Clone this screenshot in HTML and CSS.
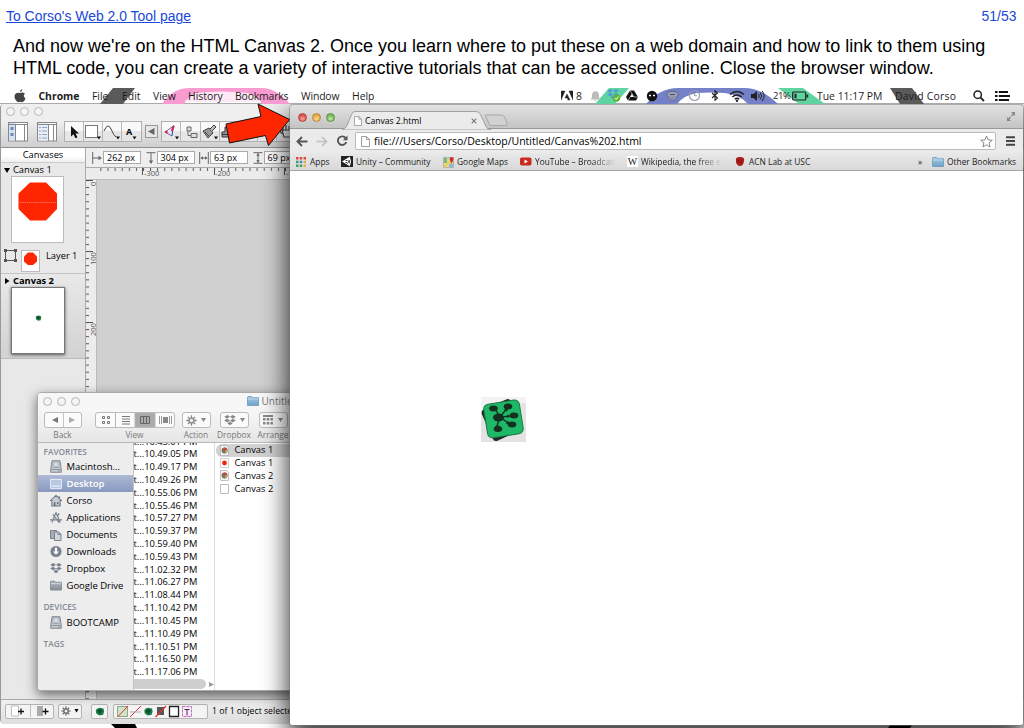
FILE: index.html
```html
<!DOCTYPE html>
<html lang="en">
<head>
<meta charset="utf-8">
<title>Web 2.0 Tutorial - 51/53</title>
<link rel="stylesheet" href="styles.css">
</head>
<body>
<svg class="defs" width="0" height="0">
  <defs>
    <linearGradient id="gFolder" x1="0" y1="0" x2="0" y2="1"><stop offset="0" stop-color="#a5cbe4"/><stop offset="1" stop-color="#6fa3c8"/></linearGradient>
    <linearGradient id="gGrey" x1="0" y1="0" x2="0" y2="1"><stop offset="0" stop-color="#b4b9c0"/><stop offset="1" stop-color="#858c96"/></linearGradient>
    <pattern id="tickH" x="0.2" width="7.1" height="12" patternUnits="userSpaceOnUse"><path d="M.5 0v3" stroke="#555"/></pattern>
    <pattern id="tickV" y="0" width="12" height="7.1" patternUnits="userSpaceOnUse"><path d="M0 .5h3" stroke="#555"/></pattern>
    <symbol id="page" viewBox="0 0 9 11"><path d="M.5.5h5l3 3v7h-8zM5.5.5v3h3" fill="#fff" stroke="#888" stroke-width=".8"/></symbol>
    <symbol id="folder" viewBox="0 0 12 10"><path d="M.5 9.5V1.2l.6-.7h3.4l1 1.2h6v7.8z" fill="url(#gFolder)" stroke="#5f8fb3" stroke-width=".7"/><path d="M.8 3h10.4" stroke="#c5e0f0" stroke-width=".8"/></symbol>
    <symbol id="drive" viewBox="0 0 12 13"><path d="M2 .7h8l1.3 8.6v3H.7v-3z" fill="#c3c8ce" stroke="#7d848e" stroke-width=".9"/><rect x="3" y="2" width="6" height="5.6" fill="#e4e7ea" stroke="#8b929b" stroke-width=".7"/><path d="M4.5 3.5v1m3-1v1M4.3 6q1.7 1 3.4 0M1 9.5h10M8 11h2" stroke="#7d848e" stroke-width=".7" fill="none"/></symbol>
    <symbol id="dbx" viewBox="0 0 12 11"><path d="M3.5 0 6 1.8 3 3.7.2 1.8zM8.5 0 6 1.8l3 1.9 2.8-1.9zM3 3.7l3 1.9-2.5 1.9L.2 5.6zM9 3.7 6 5.6l2.5 1.9 3.3-1.9zM6 6.6l2.6 1.9L6 10.3 3.4 8.5z"/></symbol>
    <symbol id="pdoc" viewBox="0 0 9 11"><path d="M.5.5h5.8l2.2 2.2v7.8h-8z" fill="#f6f6f6" stroke="#aaa" stroke-width=".7"/><circle cx="4.6" cy="5.5" r="3" fill="#4277b5"/><path d="M1.8 4.5Q4.5 1 7.2 4L4.6 5.5z" fill="#d8452c"/><path d="M1.8 4.6Q1.8 8 4.6 8.4L5 5.6z" fill="#7c7a45"/><path d="M7.4 4.4q.4 3.2-2.6 4l.6-3z" fill="#e3a13a"/></symbol>
    <symbol id="gear" viewBox="0 0 12 12"><path d="M6 .3v11.4M.3 6h11.4M2 2l8 8M10 2l-8 8" stroke="currentColor" stroke-width="1.4"/><circle cx="6" cy="6" r="3.4" fill="currentColor"/><circle cx="6" cy="6" r="1.8" fill="#f4f4f4"/></symbol>
    <symbol id="bush" viewBox="0 0 9 9"><path d="M1 2 4 .8 8 1.6l.6 3-.9 3.2-4 .8L.8 6.5.3 4z" fill="#1d7b48"/><path d="M3 2l4 1-2 4-3-2z" fill="#0d4f2d"/></symbol>
  </defs>
</svg>

<header class="top">
  <a class="top-link" href="#">To Corso's Web 2.0 Tool page</a>
  <span class="top-count">51/53</span>
</header>
<p class="caption">And now we're on the HTML Canvas 2. Once you learn where to put these on a web domain and how to link to them using<br>HTML code, you can create a variety of interactive tutorials that can be accessed online. Close the browser window.</p>

<main class="desktop">
  <nav class="menubar">
    <svg class="wall" width="1024" height="17">
      <path d="M113 1h22l-12 16h-23z" fill="#5a5a5a"/>
      <path d="M162 17Q172 1 190 1h72q14 0 28 16h-28q-4-9-18-11-22-2-44 0-10 2-16 11z" fill="#f79bd0"/><path d="M196 6q26-3 52 0l12 9h-76z" fill="#fde9f5"/>
      <path d="M609 1h20l-14 16h-20z" fill="#5fd3a0"/>
      <path d="M646 17Q660 1 678 1h66q18 0 34 16h-30q-8-9-23-11-14-1-28 0-13 2-20 11z" fill="#7480c8"/>
      <path d="M778 1h25l22 16h-26z" fill="#5fd3a0"/>
      <path d="M890 1h22l12 16h-24z" fill="#5a5a5a"/>
    </svg>
    <svg class="apple" width="12" height="14" viewBox="0 0 12 14"><path d="M8.400 0Q8.400 2.500 6 3.300 5.800 1 8.400 0M6.100 4Q8.700 2.500 11 4.700q-2.800 2.100.5 4.700Q9.500 14.300 6.300 12.800 3.500 14.300 1.500 10.800-.8 6 2.200 4.200 4 3.200 6.100 4" fill="#444"/></svg>
    <b>Chrome</b><span>File</span><span>Edit</span><span>View</span><span>History</span><span class="bm">Bookmarks</span><span class="bm">Window</span><span>Help</span>
    <svg width="12" height="11" viewBox="0 0 12 11"><path d="M0 1h4L0 10zM12 1H8l4 9zM6 4l3 6H7L6.300 8H4z" fill="#222" stroke="#222" stroke-width=".5"/></svg>
    <span>8</span>
    <svg width="11" height="12" viewBox="0 0 11 12"><path d="M.5 9.500 2 7.500V4.500Q2.500 1.500 5.500 1.200 8.500 1.500 9 4.500v3l1.500 2zM4 10.200h3q-1.500 1.800-3 0" fill="#bbb"/></svg>
    <svg width="13" height="13" viewBox="0 0 13 13"><use href="#dbx" width="12" height="11" fill="#4f9bd8"/><circle cx="9.500" cy="9" r="3.700" fill="#5eb532"/><path d="M7.700 9l1.500 1.500 2.200-3" stroke="#fff" fill="none"/></svg>
    <svg width="12" height="11" viewBox="0 0 12 11"><path d="M4 .5h4L12 7l-2 3.500H2L0 7z" fill="#111"/><path d="M6 4 7.600 7H4.400z" fill="#fff"/><path d="M4 .5 8 7h4M2 10.500 6 4" stroke="#fff" stroke-width=".6" fill="none"/></svg>
    <svg width="12" height="12" viewBox="0 0 12 12"><circle cx="6" cy="6" r="5.200" fill="#111"/><path d="M3 5.500h2m2 0h2" stroke="#fff" stroke-width="1.600"/></svg>
    <svg width="13" height="12" viewBox="0 0 13 12"><ellipse cx="6.500" cy="4.500" rx="5.800" ry="3.300" fill="#9aa0b8" stroke="#5d6382"/><path d="M1.500 6.500Q2.500 10.800 6.500 10.800t5-4.300" fill="#8a90ac" stroke="#6a708e"/><path d="M4 4.500h5" stroke="#444a6a"/></svg>
    <svg width="13" height="13" viewBox="0 0 13 13"><circle cx="6.500" cy="6.500" r="5" fill="none" stroke="#9c9caf" stroke-width="1.200"/><path d="M6.500 3.500v3.200H9" stroke="#999" fill="none"/></svg>
    <svg width="8" height="11" viewBox="0 0 8 11"><path d="M1 3l5.500 5L4 10.300V.7L6.500 3 1 8" stroke="#222" fill="none" stroke-width="1.100"/></svg>
    <svg width="16" height="12" viewBox="0 0 16 12"><path d="M1 4.500q7-6 14 0M3.300 7q4.700-4 9.400 0M5.700 9.200q2.300-2 4.600 0" stroke="#222" stroke-width="1.500" fill="none"/><circle cx="8" cy="10.700" r="1.200" fill="#222"/></svg>
    <svg width="14" height="12" viewBox="0 0 14 12"><path d="M0 4h2.500L6 1v10L2.500 8H0z" fill="#222"/><path d="M7.500 4q1.500 2 0 4M9.300 2.500q2.700 3.500 0 7M11.200 1q3.800 5 0 10" stroke="#222" fill="none"/></svg>
    <span class="pct">21%</span>
    <svg width="17" height="10" viewBox="0 0 17 10"><rect x=".7" y="1" width="13" height="8" rx="1" fill="none" stroke="#222" stroke-width="1.200"/><path d="M2.500 2.700h2v4.600h-2zM14.500 3.500h1.700v3h-1.700z" fill="#222"/></svg>
    <span>Tue 11:17 PM</span><span class="user">David Corso</span>
    <svg width="12" height="12" viewBox="0 0 12 12"><circle cx="4.700" cy="4.700" r="3.700" fill="none" stroke="#222" stroke-width="1.500"/><path d="M7.300 7.300 11 11" stroke="#222" stroke-width="1.900"/></svg>
    <svg width="15" height="12" viewBox="0 0 15 12"><path d="M0 2h2.500m1.300 0H13M0 6h2.500m1.300 0H15M0 10h2.500m1.300 0H14" stroke="#111" stroke-width="1.900"/></svg>
  </nav>

  <section class="graffle">
    <div class="g-title"><i class="dot"></i><i class="dot"></i><i class="dot"></i></div>
    <div class="g-tools">
      <svg width="20" height="20" viewBox="0 0 20 20"><rect x=".5" y=".5" width="19" height="18.500" fill="#fff" stroke="#888"/><path d="M1 1h6.500v17.500H1z" fill="#d5e0f2"/><path d="M.5 2.500h19M7.500 2v17M16.500 2v17" stroke="#888"/><path d="M2.500 5h3v3h-3zM2.500 11h3v3h-3z" fill="#6887bf"/></svg>
      <svg width="20" height="20" viewBox="0 0 20 20"><rect x=".5" y=".5" width="19" height="18.500" fill="#fff" stroke="#888"/><path d="M1 1h10v17.500H1z" fill="#e8edf6"/><path d="M.5 2.500h19M11.500 2v17M16.500 2v17" stroke="#888"/><path d="M2 5.500h2m1 0h5M2 9h2m1 0h5M2 12.500h2m1 0h5M2 16h2m1 0h5" stroke="#8fa5cc"/></svg>
      <div class="toolset">
        <span class="tool"><svg width="16" height="16" viewBox="0 0 16 16"><path d="M5 2v10.500l2.500-2.300 2 4 2-1-2-3.700H13z" fill="#111"/></svg></span>
        <span class="tool"><svg width="19" height="16" viewBox="0 0 19 16"><rect x="2.500" y="1.500" width="12" height="12" fill="#fff" stroke="#777"/><path d="M14 12.500h4L16 15.500z" fill="#111"/></svg></span>
        <span class="tool"><svg width="19" height="16" viewBox="0 0 19 16"><path d="M2 7Q6-2 9 5t5 8" fill="none" stroke="#444" stroke-width="1"/><path d="M14 12.500h4l-2 3z" fill="#111"/></svg></span>
        <span class="tool"><b>A</b><svg width="5" height="16" viewBox="0 0 5 16"><path d="M.5 12.500h4l-2 3z" fill="#111"/></svg></span>
      </div>
      <svg class="tri" width="13" height="13" viewBox="0 0 13 13"><rect x=".5" y=".5" width="12" height="12" fill="#e6e6e6" stroke="#999"/><path d="M9.500 3v7L3 6.500z" fill="#666"/></svg>
      <div class="toolset">
        <span class="tool"><svg width="18" height="16" viewBox="0 0 18 16"><path d="M11.500 2 3 8l7 4" fill="none" stroke="#66a" stroke-width="1"/><path d="M11.500 1.500 10 12" stroke="#2b4ac0"/><path d="M12 2 9.500 7M3 7.500l2.500 1" stroke="#e02050" stroke-width="1.900"/><path d="M13 12.500h4L15 15.500z" fill="#111"/></svg></span>
        <span class="tool"><svg width="16" height="16" viewBox="0 0 16 16"><path d="M4 3h4v4H4zM8 9.500h6v4H8z" fill="#ddd" stroke="#666"/><path d="M5 7v4.500h3" stroke="#666" fill="none"/></svg></span>
        <span class="tool"><svg width="18" height="16" viewBox="0 0 18 16"><path d="M2 7 8 4l4 5-5 5z" fill="#999" stroke="#444"/><path d="M9 5l4-4 2 2-4 4M4 8l4 4" stroke="#444" fill="#bbb"/><path d="M13 12.500h4L15 15.500z" fill="#111"/></svg></span>
        <span class="tool"><svg width="17" height="16" viewBox="0 0 17 16"><path d="M5 3h6v5h3v5H2V8h3zM2 10.500h12" fill="#999" stroke="#333"/></svg></span>
        <span class="tool"></span><span class="tool"></span>
        <span class="tool"><svg width="15" height="16" viewBox="0 0 15 16"><path d="M4 7V3m3 3V1m3 5V2m3 5V4M3 6l2 7h7l1-7zM3 10 1 7" fill="#eee" stroke="#444" stroke-width="1.200"/></svg></span>
      </div>
    </div>
    <div class="g-body">
      <aside class="canvases">
        <div class="c-head">Canvases</div>
        <div class="c-name"><svg width="6" height="5"><path d="M0 0h6L3 5z"/></svg>Canvas 1</div>
        <svg class="thumb1" width="53" height="67" viewBox="0 0 53 67"><rect x=".5" y=".5" width="52" height="66" fill="#fff" stroke="#bbb"/><path d="M19 6.500h16L46 17.500V33L35 44.500H19L7.500 33V17.500z" fill="#fe2600"/><path d="M9 26.500h36" stroke="#ff6f5c" stroke-dasharray="1.500 .7"/></svg>
        <div class="layer"><svg width="13" height="13" viewBox="0 0 13 13"><rect x="1.500" y="1.500" width="10" height="10" fill="none" stroke="#555"/><path d="M0 0h3v3H0zM10 0h3v3h-3zM0 10h3v3H0zM10 10h3v3h-3z" fill="#555"/></svg><svg width="19" height="22" viewBox="0 0 19 22"><rect x=".5" y=".5" width="18" height="21" fill="#fff" stroke="#bbb"/><path d="M7 2.500h5L16 6.500v5L12 15H7L3 11.500v-5z" fill="#fe2600"/></svg><span>Layer 1</span></div>
        <div class="c-two">
          <div class="c-name bold"><svg width="6" height="6"><path d="M1 0v6l4.500-3z"/></svg>Canvas 2</div>
          <div class="thumb2"><svg width="7" height="6"><use href="#bush" width="7" height="6"/></svg></div>
        </div>
      </aside>
      <div class="work">
        <div class="geom">
          <svg width="10" height="12" viewBox="0 0 10 12"><path d="M.7 0v12M1 6h7" stroke="#666"/><path d="M6.500 3.800 10 6 6.500 8.200z" fill="#666"/></svg><span class="field">262 px</span>
          <svg width="10" height="12" viewBox="0 0 10 12"><path d="M.5 .7h9M5 1v10" stroke="#666"/><path d="M2.800 8.500h4.400L5 12z" fill="#666"/></svg><span class="field">304 px</span>
          <svg width="10" height="12" viewBox="0 0 10 12"><path d="M.7 0v12M9.300 0v12M2 6h6" stroke="#666"/><path d="M1.500 6 4 4.300v3.400zM8.500 6 6 4.300v3.400z" fill="#666"/></svg><span class="field">63 px</span>
          <svg width="10" height="12" viewBox="0 0 10 12"><path d="M.5.7h9M.5 11.300h9M5 1v10" stroke="#666"/><path d="M3.300 4 5 1.500 6.700 4zM3.300 8 5 10.500 6.700 8z" fill="#666"/></svg><span class="field">69 px</span>
        </div>
        <svg class="ruler-h" width="938" height="12"><rect x="13" width="925" height="12" fill="url(#tickH)"/><path d="M56.500 0v7M128.500 0v7M198.500 0v7" stroke="#555"/><text x="58" y="8">-300</text><text x="129" y="8">-200</text><text x="200" y="8">-100</text></svg>
        <div class="canvas-row">
          <svg class="ruler-v" width="11" height="520"><rect width="11" height="520" fill="url(#tickV)"/><path d="M0 .5h7M0 71.500h7M0 142.500h7" stroke="#555"/><text transform="translate(9.500 6) rotate(-90)">0</text><text transform="translate(9.500 85) rotate(-90)">100</text><text transform="translate(9.500 156) rotate(-90)">200</text></svg>
        </div>
      </div>
    </div>
    <footer class="g-foot">
      <span class="btn pair"><svg width="44" height="12" viewBox="0 0 44 12"><path d="M3.500 1h7v10h-7z" fill="#fff" stroke="#999" stroke-width=".6"/><path d="M22.500 -2v16" stroke="#bbb"/><path d="M29 1h6v10h-6z" fill="#aaa"/><path d="M10 6.500h6M13 3.500v6M34.500 6.500h6M37.500 3.500v6" stroke="#111" stroke-width="1.300"/></svg></span>
      <span class="btn act"><svg width="10" height="10"><use href="#gear" width="10" height="10"/></svg><svg width="5" height="4"><path d="M.5 0h4L2.500 3.500z"/></svg></span>
      <span class="btn one"><svg width="10" height="9"><use href="#bush" width="10" height="9"/></svg></span>
      <span class="btn styles"><svg width="86" height="13" viewBox="0 0 86 13"><path d="M1.500 1.500h10v10h-10z" fill="#cfe3c8" stroke="#8a8"/><path d="M1.500 12 12 1M14 12 25 1" stroke="#e0322c"/><path d="M14 7h11" stroke="#aaa"/><path d="M41 2h7v8h-7z" fill="#555"/><path d="M39.500 12 50 1" stroke="#e0322c" stroke-width="1.200"/><path d="M53.500 1.500h9v10h-9z" fill="#fff" stroke="#222" stroke-width="1.300"/><path d="M66.500 1.500h9v10h-9z" fill="#fbeafb" stroke="#c46bc4" stroke-dasharray="3 1"/><path d="M68.500 4.500h5M71 4.500v6" stroke="#333"/><use href="#bush" x="28" y="2" width="9" height="9"/></svg></span>
      <span class="status">1 of 1 object selected</span>
    </footer>
  </section>

  <svg class="floor" width="1024" height="5"><path d="M111 1h24l2 4h-22zM891 1h22l-3 4h-22z" fill="#000"/></svg>

  <section class="finder">
    <div class="f-title"><i class="dot"></i><i class="dot"></i><i class="dot"></i><svg width="12" height="10"><use href="#folder" width="12" height="10"/></svg><span>Untitled</span></div>
    <div class="f-tools">
      <div class="f-group back"><div class="f-btn"><svg width="36" height="14" viewBox="0 0 36 14"><path d="M18.500 0v14" stroke="#c4c4c4"/><path d="M13 4v6L7 7z" fill="#777"/><path d="M24 4v6l6-3z" fill="#aaa"/></svg></div><span>Back</span></div>
      <div class="f-group view"><div class="f-btn"><svg width="78" height="14" viewBox="0 0 78 14"><path d="M39 0h20v14H39z" fill="#aaa"/><path d="M19.500 0v14M39 0v14M59 0v14" stroke="#b5b5b5"/><path d="M6.500 3.500h2v2h-2zM11.500 3.500h2v2h-2zM6.500 8.500h2v2h-2zM11.500 8.500h2v2h-2z" fill="none" stroke="#777" stroke-width="1"/><path d="M26 3.500h8M26 6h8M26 8.500h8M26 11h8" stroke="#777" stroke-width="1.200"/><path d="M44.500 3.500h9v7h-9zM47.500 3.500v7M50.500 3.500v7" fill="none" stroke="#666"/><path d="M63.500 3v8M65.500 3v8M73.500 3v8M75.500 3v8" stroke="#999"/><path d="M67 4h5v6h-5z" fill="#888"/></svg></div><span>View</span></div>
      <div class="f-group action"><div class="f-btn"><svg width="11" height="11"><use href="#gear" width="11" height="11"/></svg><svg width="5" height="4"><path d="M0 0h5L2.500 4z"/></svg></div><span>Action</span></div>
      <div class="f-group drop"><div class="f-btn"><svg width="12" height="11"><use href="#dbx" width="12" height="11"/></svg><svg width="5" height="4"><path d="M0 0h5L2.500 4z"/></svg></div><span>Dropbox</span></div>
      <div class="f-group arr"><div class="f-btn"><svg width="11" height="10"><path d="M0 0h10v2H0zM0 3h2.500v2.500H0zM3.700 3h2.500v2.500H3.700zM7.400 3h2.500v2.500H7.400zM0 7h2.500v2.500H0zM3.700 7h2.500v2.500H3.700zM7.400 7h2.500v2.500H7.400z"/></svg><svg width="5" height="4"><path d="M0 0h5L2.500 4z"/></svg></div><span>Arrange</span></div>
    </div>
    <div class="f-body">
      <aside class="f-side">
        <h4>FAVORITES</h4>
        <div class="row"><svg width="12" height="13"><use href="#drive"/></svg>Macintosh...</div>
        <div class="row sel"><svg width="13" height="12" viewBox="0 0 13 12"><path d="M.5 1h12v10H.5z" fill="#b9c8e2" stroke="#eef2fa"/><path d="M3 8.500h1.500m1.200 0h1.500m1.200 0H10" stroke="#fff" stroke-width="1.500"/></svg>Desktop</div>
        <div class="row"><svg width="13" height="13" viewBox="0 0 13 13"><path d="M.5 6.500 6.500 1l6 5.500H11v6H2v-6zM10 1.500v3" fill="#c6cbd1" stroke="#6c7580" stroke-width="1.100"/><path d="M4 12.500v-4h2v4M7.500 8.500h2v2h-2z" fill="#6c7580"/></svg>Corso</div>
        <div class="row"><svg width="13" height="13" viewBox="0 0 13 13"><path d="M6.500 1 2 12M6.500 1 11 12M0 9h13M3 3l7 9M8 5l2-3" stroke="#7a828d" stroke-width="1.300" fill="none"/></svg>Applications</div>
        <div class="row"><svg width="12" height="12" viewBox="0 0 12 12"><path d="M.5 1.500h6v8h-6z" fill="#a7adb5" stroke="#7a828d"/><path d="M4.500 3h4l2.500 2v6.500H4.500z" fill="#d3d7db" stroke="#7a828d"/><path d="M8 3v2.500h3" stroke="#7a828d" fill="none"/></svg>Documents</div>
        <div class="row"><svg width="13" height="13" viewBox="0 0 13 13"><circle cx="6.500" cy="6.500" r="6" fill="#77808c"/><path d="M5.300 2.500h2.400v4h2.100L6.500 10 3.200 6.500h2.100z" fill="#fff"/></svg>Downloads</div>
        <div class="row"><svg width="12" height="11"><use href="#dbx" fill="#7a838f"/></svg>Dropbox</div>
        <div class="row"><svg width="13" height="11" viewBox="0 0 13 11"><path d="M.5 10.500v-9L1 .7h4l1 1.300h6.500v8.500z" fill="url(#gGrey)" stroke="#7a828d" stroke-width=".8"/><path d="M1 3.500h11" stroke="#d5d9dd"/></svg>Google Drive</div>
        <h4 class="dev">DEVICES</h4>
        <div class="row"><svg width="12" height="13"><use href="#drive"/></svg>BOOTCAMP</div>
        <h4 class="tags">TAGS</h4>
      </aside>
      <div class="f-list">
        <div class="files">
          <div>t...10.43.01 PM</div><div>t...10.49.05 PM</div><div>t...10.49.17 PM</div><div>t...10.49.26 PM</div><div>t...10.55.06 PM</div><div>t...10.55.46 PM</div><div>t...10.57.27 PM</div><div>t...10.59.37 PM</div><div>t...10.59.40 PM</div><div>t...10.59.43 PM</div><div>t...11.02.32 PM</div><div>t...11.06.27 PM</div><div>t...11.08.44 PM</div><div>t...11.10.42 PM</div><div>t...11.10.45 PM</div><div>t...11.10.49 PM</div><div>t...11.10.51 PM</div><div>t...11.16.50 PM</div><div>t...11.17.06 PM</div>
        </div>
        <div class="scroll"><i></i><svg width="5" height="5"><path d="M0 0v5l5-2.500z" fill="#999"/></svg></div>
      </div>
      <div class="f-files">
        <div class="file on"><svg width="9" height="11"><use href="#pdoc"/></svg>Canvas 1</div>
        <div class="file"><svg width="9" height="10" viewBox="0 0 9 10"><path d="M.5.500h8v9h-8z" fill="#fff" stroke="#ccc"/><circle cx="4.500" cy="5" r="2.400" fill="#f0250a"/></svg>Canvas 1</div>
        <div class="file"><svg width="9" height="11"><use href="#pdoc"/></svg>Canvas 2</div>
        <div class="file"><svg width="9" height="10" viewBox="0 0 9 10"><path d="M.5.500h8v9h-8z" fill="#fff" stroke="#bbb"/></svg>Canvas 2</div>
      </div>
    </div>
  </section>

  <section class="browser">
    <div class="tabs">
      <div class="lights"><i class="red"></i><i class="amber"></i><i class="green"></i></div>
      <div class="tab">
        <svg class="tab-shape" width="194" height="19" viewBox="0 0 194 19"><path d="M0 18.500Q3.500 18 5 14.500L9.500 3.500Q10.500.5 13 .5H134Q137 .5 138.500 3.500L144 15.500Q145 18.500 149 18.500V19H0z" fill="#ebebeb" stroke="#9a9a9a" stroke-width=".9"/><path d="M143.500 5Q143 4 145 4h14q2.500 0 3.500 2l2.500 6q1 2.500-1.500 2.500h-13q-2.500 0-3.500-2z" fill="#d2d2d2" stroke="#a2a2a2" stroke-width=".9"/></svg>
        <svg width="8" height="10"><use href="#page" width="8" height="10"/></svg><span>Canvas 2.html</span>
        <svg class="x" width="6" height="6" viewBox="0 0 6 6"><path d="M.7.7l4.600 4.600M5.300.7.7 5.300" stroke="#777" stroke-width="1.100"/></svg>
      </div>
      <svg class="full" width="10" height="11" viewBox="0 0 10 11"><path d="M5 1h4v4zM1 6v4h4z" fill="#888"/><path d="M5.500 5 8 2.500M4.500 6 2 8.500" stroke="#888" stroke-width="1.400"/></svg>
    </div>
    <div class="bar">
      <svg class="b1" width="12" height="11" viewBox="0 0 12 11"><path d="M6 1 1.500 5.500 6 10M2 5.500h9.500" fill="none" stroke="#555" stroke-width="1.900"/></svg>
      <svg class="b2" width="12" height="11" viewBox="0 0 12 11"><path d="M6 1l4.500 4.500L6 10M10 5.500H.5" fill="none" stroke="#c0c0c0" stroke-width="1.700"/></svg>
      <svg class="b3" width="12" height="12" viewBox="0 0 12 12"><path d="M9.800 3.300A4.300 4.300 0 1 0 10.300 7" fill="none" stroke="#555" stroke-width="1.900"/><path d="M11.500.5v4.800H6.800z" fill="#555"/></svg>
      <div class="url"><svg width="9" height="11"><use href="#page"/></svg><span>file:///Users/Corso/Desktop/Untitled/Canvas%202.html</span><svg class="star" width="13" height="13" viewBox="0 0 13 13"><path d="M6.500 1l1.600 3.900 4.200.3-3.200 2.700 1 4.100-3.600-2.200L2.900 12l1-4.100L.7 5.200l4.200-.3z" fill="#fff" stroke="#888"/></svg></div>
      <svg class="burger" width="9" height="10" viewBox="0 0 9 10"><path d="M0 1.200h9M0 5h9M0 8.800h9" stroke="#444" stroke-width="2"/></svg>
    </div>
    <div class="marks">
      <svg width="10" height="10" viewBox="0 0 10 10"><path d="M0 0h2.500v2.500H0zM3.700 0h2.500v2.500H3.700zM7.500 0H10v2.500H7.500z" fill="#dc4838"/><path d="M0 3.700h2.500v2.500H0z" fill="#3fa35d"/><path d="M3.700 3.700h2.500v2.500H3.700z" fill="#4b7fd6"/><path d="M7.500 3.700H10v2.500H7.500z" fill="#eaa93a"/><path d="M0 7.500h2.500V10H0zM3.700 7.500h2.500V10H3.700z" fill="#3fa35d"/><path d="M7.500 7.500H10V10H7.500z" fill="#eaa93a"/></svg><span>Apps</span>
      <svg width="12" height="11" viewBox="0 0 12 11"><path d="M0 0h12v11H0z" fill="#222"/><path d="M8.500 1.500 2 5.500l6.500 4 1-4zM2 5.500h4.500M8.500 1.500l-2 4 2 4" fill="none" stroke="#fff" stroke-width="1.100"/></svg><span>Unity – Community</span>
      <svg width="12" height="12" viewBox="0 0 12 12"><path d="M.5 1.500h10v10H.5z" fill="#d6dcb0" stroke="#999" stroke-width=".6"/><path d="M1 11 10 3" stroke="#f0ce4a" stroke-width="2"/><path d="M6 8h4v3H6z" fill="#8fb5dc"/><path d="M1 2h3v5H1z" fill="#7fb56c"/><path d="M8.500 8 6.700 3.500a2 2 0 1 1 3.800 0z" fill="#cf3328"/></svg><span>Google Maps</span>
      <svg width="12" height="9" viewBox="0 0 12 9"><rect y=".5" width="11.500" height="8" rx="1.800" fill="#c92a22"/><path d="M4.500 2.500v4l3.500-2z" fill="#fff"/></svg><span class="fade">YouTube – Broadcast</span>
      <span class="wiki">W</span><span class="fade">Wikipedia, the free en</span>
      <svg width="10" height="11" viewBox="0 0 10 11"><path d="M1 2.500Q2 .5 5 1q3-.5 4 1.500.5 3-1 6-3 3-6 0Q.5 6 1 2.500" fill="#b0201c"/><path d="M3 3v4M6 3v5" stroke="#6e100d"/></svg><span>ACN Lab at USC</span>
      <span class="more">»</span>
      <svg width="12" height="10"><use href="#folder"/></svg><span>Other Bookmarks</span>
    </div>
    <div class="view">
      <svg class="logo" width="45" height="45" viewBox="0 0 45 45">
        <rect width="45" height="45" fill="#e6e2e4"/><path d="M0 0h45v6Q20 8 0 14z" fill="#f4f2f3"/>
        <rect x="5" y="6" width="32" height="34" rx="4" fill="#222b26" transform="rotate(-24 21 23)"/>
        <rect x="4.500" y="5" width="36" height="34" rx="5" fill="#1fb868" stroke="#157a45" transform="rotate(-9 22 22)"/>
        <path d="M19 20 13 10M19 20l8-10M19 20l14-1M19 20l-4 12M19 20l11 8" stroke="#123422" stroke-width="1.400"/>
        <path d="M23 12l4-1-1 4zM26 17.500l4 1.500-4 2zM25 27l4 .500-2-4zM14 29l2 2 2-3z" fill="#123422"/>
        <g fill="#14311f"><ellipse cx="12.500" cy="11.500" rx="4.300" ry="2.900"/><ellipse cx="27" cy="9.500" rx="4.300" ry="2.900"/><ellipse cx="17.500" cy="20.500" rx="5.500" ry="4"/><ellipse cx="33" cy="18.500" rx="4.300" ry="2.900"/><ellipse cx="31" cy="27.500" rx="4.300" ry="2.900"/><ellipse cx="17" cy="32" rx="4.300" ry="2.900"/></g>
      </svg>
    </div>
  </section>

  <svg class="arrow" width="68" height="46" viewBox="0 0 68 46"><path d="M33 1 64.500 16.500 43.500 42.500 40.500 32.500 4.500 40 1 21 36 13.500z" fill="#fe2600" stroke="#111" stroke-width="1" stroke-linejoin="round"/></svg>
</main>
</body>
</html>
```

FILE: styles.css
```css
* { box-sizing: border-box; }
body { margin: 0; width: 1024px; height: 728px; overflow: hidden; background: #fff; font-family: "Liberation Sans", Arial, sans-serif; color: #000; }
svg { display: block; flex: none; }
.defs { position: absolute; }
.top { display: flex; justify-content: space-between; height: 35px; padding: 8px 7.5px 0 6px; font-size: 13.95px; line-height: 16px; color: #1a48d8; }
.top-link { color: #1a48d8; }
.caption { margin: 0; height: 52px; padding-left: 13px; font-size: 18px; line-height: 22px; white-space: nowrap; }

.desktop { position: relative; height: 641px; overflow: hidden; background: #fff; font-family: "Open Sans", "Noto Sans", sans-serif; font-size: 9.3px; font-weight: 500; line-height: 12px; white-space: nowrap; }

.menubar { position: relative; z-index: 5; display: grid; align-items: center; height: 17px; padding: 1px 0 0 14px; background: #fff; border-bottom: 1px solid #aaa; font-size: 10.4px; color: #1c1c1c;
  grid-template-columns: 24.5px 53.5px 30px 31px 35px 47px 66px 51px 209px 15px 14px 17px 19px 20px 20px 22px 23px 18px 22px 22px 19px 25px 78px 78px 22px 20px; }
.menubar > * { position: relative; }
.menubar .wall { position: absolute; left: 0; top: 0; }
.bm { letter-spacing: -.15px; }
.user { letter-spacing: .25px; }
.pct { font-size: 9.5px; letter-spacing: -.4px; }

.dot { display: block; flex: none; width: 9px; height: 9px; border: 1px solid #b4b4b4; border-radius: 50%; background: #f4f4f4; }

.graffle { position: absolute; left: 0; top: 17px; width: 1024px; height: 620px; display: flex; flex-direction: column; border-left: 1px solid #999; border-radius: 4px 0 5px 5px; overflow: hidden; background: #e9e9e9; }
.g-title { display: flex; gap: 5px; height: 17px; padding: 3px 0 0 5px; background: #efefef; }
.g-tools { display: flex; height: 27px; padding-left: 7px; background: linear-gradient(#eee, #cfcfcf); border-bottom: 1px solid #8f8f8f; }
.g-tools > svg { margin: 1px 9px 0 0; }
.toolset { display: flex; height: 21px; border: 1px solid #b0b0b0; background: linear-gradient(#f9f9f9 50%, #e6e6e6 50%); }
.g-tools > svg + .toolset { margin-left: -2.500px; }
.g-tools .tri { margin: 4px 3px 0 3px; }
.g-tools .tri + .toolset { margin-left: 0; }
.tool { display: flex; flex: none; align-items: center; justify-content: center; width: 19.2px; border-right: 1px solid #b8b8b8; font-size: 9px; }
.tool:last-child { border: 0; }
.g-body { flex: 1; display: flex; min-height: 0; }
.canvases { width: 85px; border-right: 1px solid #aaa; background: #e8e8e8; }
.c-head { height: 15px; padding-top: 1px; text-align: center; border-bottom: 1px solid #ccc; background: linear-gradient(#fff 60%, #eee); }
.c-name { display: flex; align-items: center; gap: 3px; height: 14px; padding-left: 3px; }
.c-name.bold { height: 13px; padding-top: 0; font-weight: 700; }
.thumb1 { margin: -1px 0 6px 10px; }
.layer { display: flex; height: 24px; padding-left: 3px; }
.layer svg + svg { margin: 1px 7px 0 4px; }
.layer span { padding-top: 1px; margin-left: -1px; }
.c-two { height: 86px; border-top: 1px solid #c5c5c5; border-bottom: 1px solid #bbb; background: linear-gradient(#e9e9e9, #d2d2d2); }
.thumb2 { display: flex; align-items: center; justify-content: center; width: 54px; height: 67px; margin-left: 10px; padding-bottom: 5px; border: 1px solid #777; background: #fff; box-shadow: 0 1px 3px #555; }
.work { flex: 1; display: flex; flex-direction: column; background: #eee; }
.geom { display: flex; align-items: center; height: 20px; padding-left: 6px; border-bottom: 1px solid #aaa; }
.geom svg { margin-right: 1px; }
.geom .field { width: 38px; height: 13px; margin: 0 4.500px 0 0; padding-left: 3px; border: 1px solid #aaa; background: #fff; font-size: 9px; line-height: 12px; }
.ruler-h, .ruler-v { font-size: 7.500px; fill: #555; background: #ececec; }
.ruler-h { border-bottom: 1px solid #bbb; }
.canvas-row { flex: 1; min-height: 0; overflow: hidden; background: #d0d0d0; }
.ruler-v { border-right: 1px solid #bbb; }
.g-foot { display: flex; align-items: center; height: 25px; padding: 0 0 2px 4px; border-top: 1px solid #aaa; background: linear-gradient(#f0f0f0, #dedede); }
.btn { display: flex; align-items: center; justify-content: center; gap: 3px; height: 15px; border: 1px solid #b4b4b4; border-radius: 2px; background: #f4f4f4; color: #666; }
.pair { width: 49px; margin-right: 4px; }
.act { width: 24px; margin-right: 9px; }
.one { width: 17px; margin-right: 5px; }
.styles { justify-content: flex-start; width: 95px; padding-left: 2px; margin-right: 4px; }
.status { font-size: 8.7px; }
.floor { position: absolute; left: 0; top: 636px; }

.finder { position: absolute; left: 36.5px; top: 305px; width: 500px; height: 299px; display: flex; flex-direction: column; border: 1px solid #aaa; border-radius: 4px; overflow: hidden; background: #fff; box-shadow: 0 4px 12px rgba(0,0,0,.55); }
.f-title { display: flex; align-items: center; gap: 5px; height: 17px; padding: 0 0 1px 5px; background: #f7f7f7; color: #777; font-size: 10px; }
.f-title svg { margin-left: 162px; }
.f-title span { margin-left: -2px; }
.f-tools { display: flex; height: 33px; padding: 2px 0 0 6px; background: linear-gradient(#f7f7f7, #e6e6e6); border-bottom: 1px solid #b8b8b8; font-size: 8.3px; line-height: 11px; color: #777; }
.f-group { display: flex; flex-direction: column; align-items: center; }
.f-btn { display: flex; align-items: center; justify-content: center; gap: 4px; width: 100%; height: 16px; margin-bottom: 1px; border: 1px solid #bbb; border-radius: 3px; background: #fbfbfb; color: #888; fill: #888; }
.back { width: 38px; margin-right: 13px; }
.f-group.view { flex: none; width: 80px; margin-right: 7px; }
.action { width: 29px; margin-right: 9px; }
.drop { width: 29px; margin-right: 10px; }
.arr { width: 29px; }
.f-body { flex: 1; display: flex; min-height: 0; }
.f-side { width: 96px; border-right: 1px solid #c4c4c4; background: #ededee; }
.f-side h4 { margin: 0; height: 15px; padding: 3px 0 0 6px; font-size: 8.3px; line-height: 12px; font-weight: 600; color: #848b94; }
.row { display: flex; align-items: center; gap: 5px; height: 17px; padding-left: 12px; font-size: 9.5px; }
.row svg { width: 12px; }
.sel { color: #fff; font-weight: 600; background: linear-gradient(#aebad6, #8898be); }
.f-side .dev { margin-top: 4px; height: 16px; }
.f-side .tags { margin-top: 4px; }
.f-list { width: 81px; border-right: 1px solid #ddd; }
.files { height: 235px; overflow: hidden; }
.files div { height: 12.82px; line-height: 12.82px; }
.files div:first-child { margin-top: -7.500px; }
.scroll { display: flex; align-items: center; gap: 3px; height: 12px; }
.scroll i { width: 72px; height: 10px; border-radius: 0 5px 5px 0; background: #cfcfcf; }
.f-files { flex: 1; padding: 1px 0 0 1px; }
.file { display: flex; align-items: center; gap: 6px; height: 12.8px; padding-left: 4px; }
.on { border-radius: 6px 0 0 6px; background: #d2d2d2; }

.browser { position: absolute; left: 290px; top: 17px; width: 733px; height: 621px; display: flex; flex-direction: column; border-radius: 4px 4px 3px 3px; background: #fff; box-shadow: 0 0 0 .5px #777, 0 12px 26px 2px rgba(0,0,0,.8); }
.tabs { display: flex; height: 25px; padding: 0 7px 0 8px; border-radius: 4px 4px 0 0; border-top: 1px solid #aaa; border-bottom: 1px solid #999; background: linear-gradient(#e2e2e2, #c4c4c4); }
.lights { display: flex; gap: 5px; padding-top: 8px; }
.lights i { width: 9px; height: 9px; border: 1px solid #b7453f; border-radius: 50%; background: radial-gradient(circle at 50% 70%, #f5a49c, #d94b45 70%); }
.lights .amber { border-color: #b98932; background: radial-gradient(circle at 50% 70%, #fbdc93, #e0a33f 70%); }
.lights .green { border-color: #5a9440; background: radial-gradient(circle at 50% 70%, #c2e8a4, #72b454 70%); }
.tab { position: relative; display: flex; align-items: center; width: 194px; height: 19px; margin: 6px 0 0 7px; font-size: 8.600px; }
.tab > * { position: relative; }
.tab .tab-shape { position: absolute; left: 0; top: 0; }
.tab > svg:nth-child(2) { margin: 0 3px 0 12px; }
.tab span { width: 106px; }
.full { margin: 6px 0 0 auto; }
.bar { display: flex; align-items: center; height: 24px; padding: 0 8px 0 6px; background: #ebebeb; }
.b2 { margin-left: 8px; }
.b3 { margin-left: 8px; }
.url { flex: 1; display: flex; align-items: center; height: 18px; margin: 0 10px 0 7px; padding: 0 2px 0 5px; border: 1px solid #bbb; border-radius: 2px; background: #fff; font-size: 10.5px; }
.url span { margin-left: 4px; }
.star { margin-left: auto; }
.marks { display: grid; align-items: center; height: 18px; padding-left: 6px; background: linear-gradient(#e8e8e8, #d9d9d9); border-bottom: 1px solid #a5a5a5; font-size: 8.4px; color: #222;
  grid-template-columns: 14px 31px 15px 87px 14px 63px 15px 92px 14px 94px 14px 169px 14px 15px 76px; }
.wiki { width: 11px; height: 11px; background: #fff; font: 10px/11px "Liberation Serif", serif; text-align: center; }
.fade { width: 81px; overflow: hidden; -webkit-mask-image: linear-gradient(90deg, #000 70%, transparent); mask-image: linear-gradient(90deg, #000 70%, transparent); }
.browser .view { flex: 1; padding: 226px 0 0 191px; border-radius: 0 0 3px 3px; background: #fff; }

.arrow { position: absolute; z-index: 6; left: 225px; top: 16px; }
```
